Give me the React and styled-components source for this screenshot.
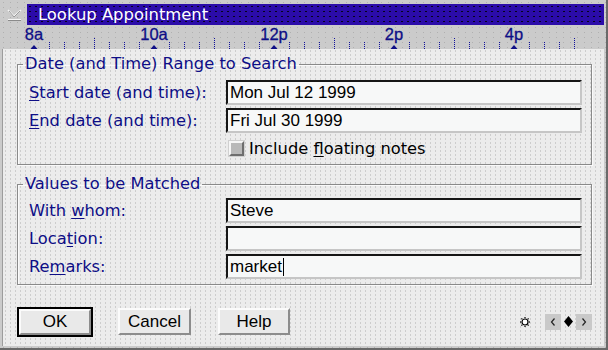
import React from 'react'
import styled, { createGlobalStyle } from 'styled-components'

const NAVY = '#0e0e86'
const LABEL_FONT = `"DejaVu Sans", "Liberation Sans", sans-serif`
const TEXT_FONT = `"Liberation Sans", Arial, sans-serif`

const GlobalStyle = createGlobalStyle`
  html, body {
    margin: 0;
    padding: 0;
    background: #c9c9c9;
  }
  body {
    width: 608px;
    height: 350px;
    overflow: hidden;
  }
`

const Window = styled.div`
  box-sizing: border-box;
  width: 608px;
  height: 350px;
  display: flex;
  flex-direction: column;
  padding: 0 2px 2px 2px;
  border-right: 2px solid #6a6a6a;
  border-bottom: 2px solid #6a6a6a;
  background-color: #cbcbcb;
  background-image: radial-gradient(circle, #b0b0b0 0.6px, transparent 0.9px);
  background-size: 7px 5px;
`

const TitleRow = styled.div`
  display: flex;
  height: 25px;
  padding-top: 4px;
  box-sizing: border-box;
`

const MenuBox = styled.div`
  width: 25px;
  display: flex;
  justify-content: center;
  padding-top: 3px;
  box-sizing: border-box;
`

const TitleBar = styled.div`
  flex: 1;
  height: 21px;
  display: flex;
  align-items: center;
  padding-left: 11px;
  background-color: #2b0ca9;
  background-image: radial-gradient(circle, #06031c 0.6px, transparent 0.9px);
  background-size: 6px 5px;
  color: #ffffff;
  font-family: ${LABEL_FONT};
  font-size: 16.4px;
`

const Ruler = styled.div`
  position: relative;
  height: 24px;
  display: flex;
  padding-left: 32px;
  padding-top: 1px;
  box-sizing: border-box;
  overflow: hidden;
`

const HourCell = styled.div`
  flex: 0 0 120px;
  height: 17px;
`

const HourLabel = styled.span`
  display: inline-block;
  transform: translateX(-50%);
  font-family: ${TEXT_FONT};
  font-size: 16.5px;
  line-height: 17px;
  color: ${NAVY};
  -webkit-text-stroke: 0.3px ${NAVY};
`

const TickLayer = styled.svg`
  position: absolute;
  left: 0;
  top: 0;
`

const Body = styled.div`
  flex: 1;
  display: flex;
  flex-direction: column;
  padding: 7px 12px 0 14px;
  border-left: 1px solid #9c9c9c;
  background-color: #ececec;
  background-image: radial-gradient(circle, #cdcdcd 0.6px, transparent 0.9px);
  background-size: 5px 4px;
`

const Group = styled.fieldset`
  margin: ${p => p.$top}px 0 0 0;
  padding: ${p => p.$padTop}px 8px ${p => p.$padBottom}px 11px;
  border: 1px solid #8a8a8a;
  box-shadow: 1px 1px 0 #fafafa, inset 1px 1px 0 #fafafa;
  display: grid;
  grid-template-columns: 197px 356px;
  row-gap: 3px;
  min-width: 0;
`

const Legend = styled.legend`
  margin-left: -6px;
  padding: 0 2px;
  font-family: ${LABEL_FONT};
  font-size: 16.3px;
  line-height: 16px;
  color: ${NAVY};
`

const Label = styled.div`
  align-self: center;
  font-family: ${LABEL_FONT};
  font-size: 16.3px;
  line-height: 20px;
  color: ${NAVY};
  white-space: pre;
`

const Key = styled.span`
  text-decoration: underline;
  text-underline-offset: 2px;
`

const Field = styled.div`
  box-sizing: border-box;
  height: 25px;
  display: flex;
  align-items: center;
  padding-left: 2px;
  border-top: 2px solid #161616;
  border-left: 2px solid #161616;
  border-right: 2px solid #c6c6c6;
  border-bottom: 2px solid #c6c6c6;
  background: #f7f8f8;
  font-family: ${TEXT_FONT};
  font-size: 17px;
  color: #000;
  white-space: pre;
`

const Caret = styled.span`
  display: inline-block;
  width: 1px;
  height: 18px;
  margin-left: 1px;
  background: #000;
`

const CheckRow = styled.div`
  grid-column: 2;
  height: 23px;
  margin-top: 1px;
  display: flex;
  align-items: center;
  gap: 5px;
  padding-left: 3px;
  font-family: ${LABEL_FONT};
  font-size: 16.3px;
  color: #000;
  white-space: pre;
`

const CheckBox = styled.span`
  box-sizing: border-box;
  display: block;
  flex: 0 0 15px;
  width: 15px;
  height: 15px;
  background: #b9b9b9;
  border-top: 2px solid #f6f6f6;
  border-left: 2px solid #f6f6f6;
  border-right: 2px solid #6e6e6e;
  border-bottom: 2px solid #6e6e6e;
  box-shadow: 0 0 0 1px #d0d0d0;
`

const ButtonBar = styled.div`
  display: flex;
  align-items: center;
  margin-top: 21px;
  height: 31px;
`

const DefaultFrame = styled.div`
  border: 2px solid #000;
  display: flex;
`

const Button = styled.button`
  box-sizing: border-box;
  width: ${p => p.$w || 73}px;
  height: ${p => p.$h || 27}px;
  margin-left: ${p => p.$gap || 0}px;
  padding: 0;
  background: #e9e9e9;
  border-top: 2px solid #fbfbfb;
  border-left: 2px solid #fbfbfb;
  border-right: 2px solid #8c8c8c;
  border-bottom: 2px solid #8c8c8c;
  font-family: ${TEXT_FONT};
  font-size: 17px;
  color: #000;
`

const Spacer = styled.div`
  flex: 1;
`

const Nav = styled.div`
  display: flex;
  align-items: center;
  gap: 3px;
  margin-left: 15px;
`

const NavBox = styled.div`
  width: 16px;
  height: 16px;
  display: flex;
  align-items: center;
  justify-content: center;
  background-color: #dadada;
  background-image: radial-gradient(circle, #b5b5b5 0.6px, transparent 0.8px);
  background-size: 2px 2px;
`

function RulerTicks() {
  const lines = []
  for (let x = 49; x <= 574; x += 15) {
    const off = x - 34
    if (off % 120 === 0) continue
    const tall = off % 60 === 0
    lines.push(
      <line
        key={x}
        x1={x - 1.5}
        x2={x - 1.5}
        y1={tall ? 13 : 17}
        y2={24}
        stroke="#10109c"
        strokeDasharray="1 1"
      />
    )
  }
  const marks = [34, 154, 274, 394, 514].map(x => (
    <polygon key={x} points={`${x - 5.5},24 ${x + 1.5},24 ${x - 2},20`} fill={NAVY} />
  ))
  return (
    <TickLayer width="602" height="24">
      {lines}
      {marks}
    </TickLayer>
  )
}

function MenuIcon() {
  return (
    <svg width="16" height="15" viewBox="0 0 16 15">
      <polyline points="1,3 7,9 14,3" fill="none" stroke="#f4f4f4" strokeWidth="1.5" />
      <polyline points="2,4 7,10 13,4" fill="none" stroke="#9a9a9a" strokeWidth="1" />
      <line x1="1" y1="12.5" x2="14" y2="12.5" stroke="#f4f4f4" strokeWidth="1" />
      <line x1="1" y1="13.5" x2="14" y2="13.5" stroke="#8a8a8a" strokeWidth="1" />
    </svg>
  )
}

function SunIcon() {
  const rays = [0, 45, 90, 135, 180, 225, 270, 315].map(a => {
    const r = (a * Math.PI) / 180
    return <rect key={a} x={5 + Math.cos(r) * 4.5 - 0.6} y={5 + Math.sin(r) * 4.5 - 0.6} width="1.2" height="1.2" fill="#000" />
  })
  return (
    <svg width="10" height="10" viewBox="0 0 10 10">
      <circle cx="5" cy="5" r="3" fill="#fff" stroke="#000" strokeWidth="1.2" />
      {rays}
    </svg>
  )
}

const hours = ['8a', '10a', '12p', '2p', '4p']

export default function App() {
  return (
    <>
      <GlobalStyle />
      <Window>
        <TitleRow>
          <MenuBox>
            <MenuIcon />
          </MenuBox>
          <TitleBar>Lookup Appointment</TitleBar>
        </TitleRow>

        <Ruler>
          <RulerTicks />
          {hours.map(h => (
            <HourCell key={h}>
              <HourLabel>{h}</HourLabel>
            </HourCell>
          ))}
        </Ruler>

        <Body>
          <Group $top={0} $padTop={8} $padBottom={4}>
            <Legend>Date (and Time) Range to Search</Legend>
            <Label><Key>S</Key>tart date (and time):</Label>
            <Field>Mon Jul 12 1999</Field>
            <Label><Key>E</Key>nd date (and time):</Label>
            <Field>Fri Jul 30 1999</Field>
            <CheckRow>
              <CheckBox />
              <span>Include <Key>f</Key>loating notes</span>
            </CheckRow>
          </Group>

          <Group $top={11} $padTop={6} $padBottom={5}>
            <Legend>Values to be Matched</Legend>
            <Label>With <Key>w</Key>hom:</Label>
            <Field>Steve</Field>
            <Label>Loca<Key>t</Key>ion:</Label>
            <Field />
            <Label>Re<Key>m</Key>arks:</Label>
            <Field>market<Caret /></Field>
          </Group>

          <ButtonBar>
            <DefaultFrame>
              <Button $w={72} $h={26}>OK</Button>
            </DefaultFrame>
            <Button $gap={25}>Cancel</Button>
            <Button $gap={27} $w={72}>Help</Button>
            <Spacer />
            <SunIcon />
            <Nav>
              <NavBox>
                <svg width="6" height="8" viewBox="0 0 6 8">
                  <polyline points="4.5,0.5 1.5,4 4.5,7.5" fill="none" stroke="#222" strokeWidth="1.2" />
                </svg>
              </NavBox>
              <svg width="9" height="11" viewBox="0 0 9 11">
                <polygon points="4.5,0 9,5.5 4.5,11 0,5.5" fill="#000" />
              </svg>
              <NavBox>
                <svg width="6" height="8" viewBox="0 0 6 8">
                  <polyline points="1.5,0.5 4.5,4 1.5,7.5" fill="none" stroke="#222" strokeWidth="1.2" />
                </svg>
              </NavBox>
            </Nav>
          </ButtonBar>
        </Body>
      </Window>
    </>
  )
}
